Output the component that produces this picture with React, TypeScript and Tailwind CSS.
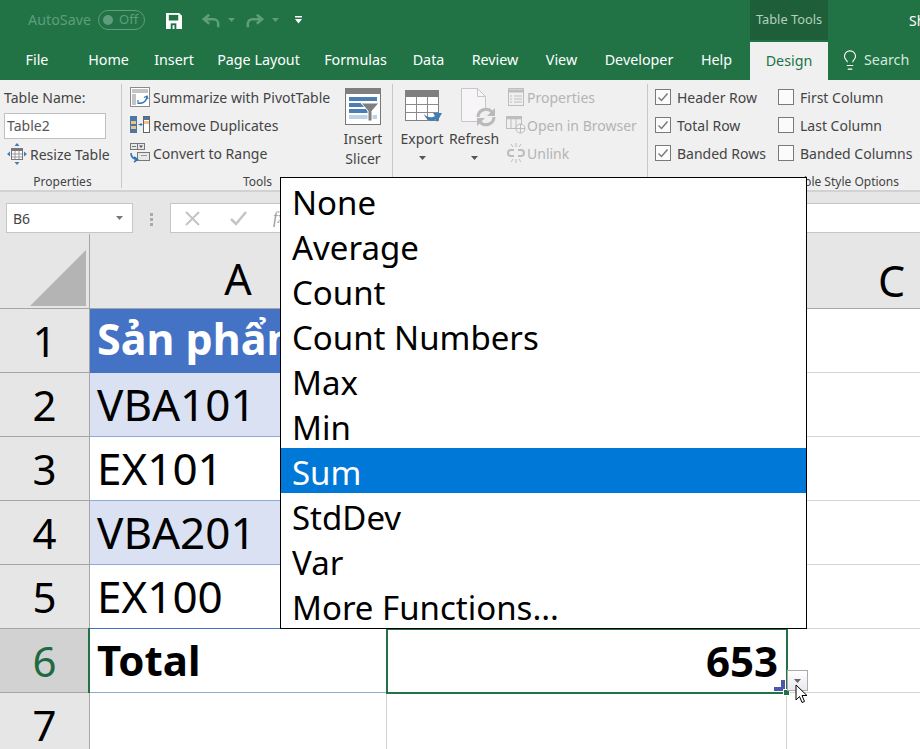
import { Lightbulb } from "lucide-react";

const tabs = [
  { label: "File", w: 74 },
  { label: "Home", w: 69 },
  { label: "Insert", w: 62 },
  { label: "Page Layout", w: 107 },
  { label: "Formulas", w: 87 },
  { label: "Data", w: 59 },
  { label: "Review", w: 74 },
  { label: "View", w: 59 },
  { label: "Developer", w: 96 },
  { label: "Help", w: 59 },
];

const menuItems = ["None", "Average", "Count", "Count Numbers", "Max", "Min", "Sum", "StdDev", "Var", "More Functions..."];

function Check({ on, label }: { on: boolean; label: string }) {
  return (
    <div className="flex h-7 items-center gap-[6px] whitespace-nowrap">
      <span className="flex h-[16px] w-[16px] items-center justify-center border border-[#7a7a7a] bg-[#fbfbfb]">
        {on && (
          <svg width="12" height="12" viewBox="0 0 12 12" fill="none" stroke="#777" strokeWidth="1.4">
            <path d="M1.5 6.5 4.5 9.5 10.5 2.5" />
          </svg>
        )}
      </span>
      <span>{label}</span>
    </div>
  );
}

function PivotIcon() {
  return (
    <svg width="20" height="20" viewBox="0 0 20 20">
      <rect x="0.5" y="0.5" width="19" height="19" fill="#fff" stroke="#8a8a8a" />
      <rect x="2" y="2" width="16" height="4" fill="#c4c4c4" />
      <rect x="2" y="7" width="4" height="11" fill="#c4c4c4" />
      <path d="M9 16c4 .5 7-1.500 8-6" fill="none" stroke="#2f75b5" strokeWidth="1.300" />
      <path d="M8 13v3.500h3.500M14 10.500l3-1.500 1 3" fill="none" stroke="#2f75b5" strokeWidth="1.200" />
    </svg>
  );
}

function DuplicatesIcon() {
  return (
    <svg width="20" height="18" viewBox="0 0 20 18">
      <rect x="0" y="0" width="7" height="17" fill="#4a76a8" />
      <rect x="1" y="5" width="5" height="3" fill="#f0c27a" />
      <rect x="1" y="10" width="5" height="3" fill="#f0c27a" />
      <rect x="13.500" y="0.500" width="6" height="16" fill="#fff" stroke="#666" />
      <rect x="14" y="1" width="5" height="3" fill="#4a76a8" />
      <rect x="14" y="5" width="5" height="3" fill="#f0c27a" />
      <path d="M8.500 8.500h3.500M10.500 7l1.500 1.500-1.500 1.500" fill="none" stroke="#2f75b5" />
    </svg>
  );
}

function ConvertIcon() {
  return (
    <svg width="20" height="20" viewBox="0 0 20 20">
      <rect x="0.500" y="0.500" width="14" height="6" fill="#e8e8e8" stroke="#777" />
      <path d="M2 3.500h4M7.500.5v6" stroke="#777" />
      <path d="M9 2.500h4l-2 2.500z" fill="#555" />
      <rect x="7.500" y="9.500" width="12" height="8" fill="#e8e8e8" stroke="#777" />
      <path d="M11 12.500h6" stroke="#999" />
      <path d="M1 10c0 4 3 6 6 6.500M4 14l3.500 2.500L4 19" fill="none" stroke="#2f75b5" strokeWidth="1.600" />
    </svg>
  );
}

function ResizeIcon() {
  return (
    <svg width="20" height="22" viewBox="0 0 20 22">
      <rect x="4.500" y="5.500" width="11" height="11" fill="#fff" stroke="#777" />
      <rect x="5" y="5" width="10" height="3" fill="#777" />
      <path d="M8 8v8M12 8v8M5 11h10M5 14h10" stroke="#999" />
      <path d="M10 0l-2.500 3h5zM10 22l-2.500-3h5zM0 11l3-2.500v5zM20 11l-3-2.500v5z" fill="#3f7cb8" />
    </svg>
  );
}

function SlicerIcon() {
  return (
    <svg width="36" height="37" viewBox="0 0 36 37">
      <rect x="0.500" y="0.500" width="35" height="36" fill="#fff" stroke="#777" />
      <rect x="0" y="0" width="36" height="6" fill="#7f7f7f" />
      <rect x="4" y="9" width="28" height="4" fill="#4a7eb5" />
      <rect x="4" y="15" width="16" height="4" fill="#4a7eb5" />
      <rect x="4" y="21" width="20" height="4" fill="#4a7eb5" />
      <rect x="4" y="27" width="28" height="4" fill="#bcd2e8" />
      <path d="M16 15h18l-7 8v10h-4V23z" fill="#7f7f7f" stroke="#fff" />
    </svg>
  );
}

function ExportIcon() {
  return (
    <svg width="38" height="37" viewBox="0 0 38 37">
      <rect x="0.500" y="0.500" width="33" height="30" fill="#fff" stroke="#808080" />
      <rect x="0" y="0" width="34" height="7" fill="#7f7f7f" />
      <path d="M11.500 7v24M22.500 7v24M1 14.500h32M1 22.500h32" stroke="#8a8a8a" />
      <path d="M19 24c3 4 8 4 11 2l-2-3h9l-5 9-1.500-2.500c-5 3-10 0-11.500-5.500z" fill="#3f7cb8" />
    </svg>
  );
}

function RefreshIcon() {
  return (
    <svg width="35" height="39" viewBox="0 0 35 39">
      <path d="M.5.5h16l8 8v25H.5z" fill="#f7f5f7" stroke="#c9c4c9" />
      <path d="M16.500.5v8h8" fill="none" stroke="#c9c4c9" />
      <circle cx="25" cy="29" r="9.500" fill="#f0f0f0" />
      <path d="M17 29a8 8 0 0 1 14-5M33 29a8 8 0 0 1-14 5" fill="none" stroke="#b9b9b9" strokeWidth="3" />
      <path d="M34 20v8h-8zM16 38v-8h8z" fill="#b9b9b9" />
    </svg>
  );
}

function PropsIcon() {
  return (
    <svg width="16" height="18" viewBox="0 0 16 18" fill="none" stroke="#bdbdbd">
      <rect x="0.500" y="0.500" width="15" height="17" />
      <path d="M0 3h16" strokeWidth="3" />
      <path d="M6 8h8M6 11h8M6 14h8M2 8h2M2 11h2M2 14h2" />
    </svg>
  );
}

function BrowserIcon() {
  return (
    <svg width="20" height="18" viewBox="0 0 20 18" fill="none" stroke="#bdbdbd">
      <rect x="0.500" y="0.500" width="15" height="12" />
      <path d="M0 2h16" strokeWidth="2.500" />
      <path d="M5 2v10M10 2v10" />
      <circle cx="14.500" cy="12.500" r="4.500" fill="#f0f0f0" />
      <path d="M10 12.500h9M14.500 8v9" />
    </svg>
  );
}

function UnlinkIcon() {
  return (
    <svg width="18" height="20" viewBox="0 0 18 20" fill="none" stroke="#bdbdbd">
      <path d="M7 7H4a3 3 0 0 0 0 6h3M11 7h3a3 3 0 0 1 0 6h-3" strokeWidth="2" />
      <path d="M9 0v4M9 16v4M4 1l2 3M14 1l-2 3M4 19l2-3M14 19l-2-3" />
    </svg>
  );
}

function Caret({ c = "#555" }: { c?: string }) {
  return (
    <svg width="7" height="4" viewBox="0 0 7 4">
      <path d="M0 0h7L3.500 4z" fill={c} />
    </svg>
  );
}

function TitleBar() {
  return (
    <div className="flex h-10 overflow-hidden bg-[#217346] [&>*]:shrink-0">
      <div className="ml-7 flex h-10 w-[62px] items-center whitespace-nowrap text-[14.3px] text-[#5f9d7c]">AutoSave</div>
      <div className="ml-2 mt-[10px] flex h-[20px] w-[47px] items-center rounded-full border border-[#5f9d7c] pl-[4px] text-[13px] text-[#5f9d7c]">
        <span className="h-[10px] w-[10px] rounded-full bg-[#5f9d7c]" />
        <span className="ml-[6px]">Off</span>
      </div>
      <svg className="ml-[21px] mt-[13px]" width="16" height="16" viewBox="0 0 17 17">
        <path d="M0 0h14l3 3v14H0z" fill="#fff" />
        <rect x="3" y="2" width="10" height="6" fill="#217346" />
        <rect x="5" y="11" width="6" height="6" fill="#217346" />
        <rect x="7" y="13" width="2" height="4" fill="#fff" />
      </svg>
      <svg className="ml-5 mt-[13px]" width="18" height="16" viewBox="0 0 20 16" fill="none" stroke="#5f9d7c" strokeWidth="2.800">
        <path d="M8 1 2 6l6 5M2 6h11a5 5 0 0 1 5 5v4" />
      </svg>
      <div className="ml-2 mt-[18px]"><Caret c="#5f9d7c" /></div>
      <svg className="ml-[11px] mt-[13px]" width="18" height="16" viewBox="0 0 20 16" fill="none" stroke="#5f9d7c" strokeWidth="2.800">
        <path d="M12 1l6 5-6 5M18 6H7a5 5 0 0 0-5 5v4" />
      </svg>
      <div className="ml-2 mt-[18px]"><Caret c="#5f9d7c" /></div>
      <svg className="ml-4 mt-4" width="7" height="8" viewBox="0 0 7 8">
        <path d="M0 0h7v1.500H0zM0 3h7L3.500 7.500z" fill="#fff" />
      </svg>
      <div className="ml-[448px] flex h-[42px] w-[78px] items-center justify-center whitespace-nowrap bg-[#1e5f39] pb-[3px] text-[12.800px] text-[#b3d0bf]">
        Table Tools
      </div>
      <div className="ml-[81px] flex h-10 items-center whitespace-nowrap text-[14px] text-white">Sh</div>
    </div>
  );
}

function TabBar() {
  return (
    <div className="flex h-10 bg-[#217346] text-[14.3px] text-white">
      {tabs.map((t) => (
        <div key={t.label} className="flex items-center justify-center" style={{ width: t.w }}>
          {t.label}
        </div>
      ))}
      <div className="ml-[4px] mt-[2px] flex h-[38px] w-[78px] items-center justify-center bg-[#f0f0f0] text-[#217346]">Design</div>
      <div className="ml-[11px] flex items-center gap-[3px] text-[#d5e6dc]">
        <Lightbulb size={22} strokeWidth={1.200} color="#fff" />
        <span>Search</span>
      </div>
    </div>
  );
}

function GroupLabel({ children }: { children: React.ReactNode }) {
  return <div className="mt-auto whitespace-nowrap text-center text-[12px] leading-[12px] text-[#444]">{children}</div>;
}

function Ribbon() {
  return (
    <div className="flex h-[112px] border-b-2 border-[#d2d2d2] bg-[#f0f0f0] text-[14px] text-[#444]">
      <div className="mb-[2px] mr-px mt-[4px] flex w-[122px] flex-col border-r border-[#c8c8c8] pl-1 pt-[4px]">
        <div className="h-[20px] leading-[20px]">Table Name:</div>
        <div className="mt-[5px] h-[26px] w-[102px] border border-[#c0c0c0] bg-white pl-[2px] text-[14px] leading-[23px] text-[#555]">Table2</div>
        <div className="mt-[4px] flex items-center gap-[3px] pl-[3px]">
          <ResizeIcon />
          <span>Resize Table</span>
        </div>
        <GroupLabel>Properties</GroupLabel>
      </div>

      <div className="mb-[2px] mt-[4px] flex w-[270px] flex-col border-r border-[#c8c8c8]">
        <div className="flex">
          <div className="-mt-px flex w-[222px] flex-col pl-[7px]">
            <div className="flex h-7 items-center gap-[3px]"><PivotIcon /><span>Summarize with PivotTable</span></div>
            <div className="flex h-7 items-center gap-[3px]"><DuplicatesIcon /><span>Remove Duplicates</span></div>
            <div className="flex h-7 items-center gap-[3px]"><ConvertIcon /><span>Convert to Range</span></div>
          </div>
          <div className="flex w-[36px] flex-col items-center pt-[4px]">
            <SlicerIcon />
            <div className="mt-[4px] text-center leading-[20px]">Insert<br />Slicer</div>
          </div>
        </div>
        <GroupLabel>Tools</GroupLabel>
      </div>

      <div className="mb-[2px] mt-[4px] flex w-[255px] border-r border-[#c8c8c8] pl-[5px]">
        <div className="flex w-[48px] flex-col items-center pt-[6px]">
          <div className="ml-[4px]"><ExportIcon /></div>
          <div className="mt-[2px] leading-[20px]">Export</div>
          <div className="mt-[7px]"><Caret /></div>
        </div>
        <div className="ml-[4px] flex w-[48px] flex-col items-center pt-[4px]">
          <div className="ml-[8px]"><RefreshIcon /></div>
          <div className="mt-[2px] leading-[20px]">Refresh</div>
          <div className="mt-[7px]"><Caret /></div>
        </div>
        <div className="-mt-px ml-[8px] flex flex-col text-[#b4b4b4]">
          <div className="flex h-7 items-center gap-[1px]"><span className="flex w-5 justify-center"><PropsIcon /></span><span>Properties</span></div>
          <div className="flex h-7 items-center gap-[1px]"><span className="flex w-5 justify-center"><BrowserIcon /></span><span>Open in Browser</span></div>
          <div className="flex h-7 items-center gap-[1px]"><span className="flex w-5 justify-center"><UnlinkIcon /></span><span>Unlink</span></div>
        </div>
      </div>

      <div className="mb-[2px] mt-[4px] flex flex-1 flex-col pl-[7px]">
        <div className="-mt-px flex">
          <div className="w-[123px]">
            <Check on label="Header Row" />
            <Check on label="Total Row" />
            <Check on label="Banded Rows" />
          </div>
          <div>
            <Check on={false} label="First Column" />
            <Check on={false} label="Last Column" />
            <Check on={false} label="Banded Columns" />
          </div>
        </div>
        <div className="mt-auto pr-[21px] text-right text-[12px] leading-[12px] text-[#444]">Table Style Options</div>
      </div>
    </div>
  );
}

function FormulaBar() {
  return (
    <div className="flex h-[42px] items-end bg-[#e6e6e6] pb-px pl-[6px]">
      <div className="flex h-[30px] w-[127px] items-center justify-between border border-[#c6c6c6] bg-white pl-[6px] pr-[9px] text-[14px] text-[#444]">
        B6
        <Caret c="#777" />
      </div>
      <div className="mb-[7px] ml-[17px] mr-[17px] flex flex-col gap-[2px]">
        <span className="h-[3px] w-[3px] bg-[#aaa]" />
        <span className="h-[3px] w-[3px] bg-[#aaa]" />
        <span className="h-[3px] w-[3px] bg-[#aaa]" />
      </div>
      <div className="flex h-[30px] flex-1 items-center border-y border-l border-[#c6c6c6] bg-white pl-[14px]">
        <svg width="15" height="15" viewBox="0 0 15 15" stroke="#c4c4c4" strokeWidth="2">
          <path d="M1 1l13 13M14 1 1 14" />
        </svg>
        <svg className="ml-[30px]" width="17" height="15" viewBox="0 0 17 15" fill="none" stroke="#c4c4c4" strokeWidth="2.500">
          <path d="M1 8l5 5L16 1" />
        </svg>
        <span className="ml-[26px] font-['Liberation_Serif',serif] text-[16px] italic text-[#999]">fx</span>
      </div>
    </div>
  );
}

function RowHead({ n, active, last }: { n: number; active?: boolean; last?: boolean }) {
  return (
    <div
      className={`flex items-center justify-center border-r border-[#a6a6a6] text-[42px] leading-none ${
        last ? "h-14 pt-2" : "h-16 border-b"
      } ${active ? "bg-[#d2d2d2] text-[#1e6b41]" : "bg-[#e6e6e6] text-black"}`}
    >
      {n}
    </div>
  );
}

function Cell({ children, cls = "" }: { children?: React.ReactNode; cls?: string }) {
  return <div className={`flex h-16 items-center overflow-hidden whitespace-nowrap border-b border-r pb-[2px] pl-[7px] text-black ${cls}`}>{children}</div>;
}

function Sheet() {
  const plain = "border-[#d4d4d4] border-r-0";
  return (
    <div className="grid grid-cols-[90px_297px_400px_133px]">
      <div className="flex h-[75px] items-end justify-end border-b border-r border-[#a6a6a6] bg-[#e6e6e6] pb-[2px] pr-[3px]">
        <svg width="56" height="56" viewBox="0 0 56 56">
          <path d="M0 56 56 0v56z" fill="#b4b4b4" />
        </svg>
      </div>
      <div className="flex h-[75px] items-center justify-center border-b border-r border-[#a6a6a6] bg-[#e6e6e6] pt-[14px] text-[43px] leading-none text-black">A</div>
      <div className="h-[75px] border-b border-r border-[#a6a6a6] bg-[#e6e6e6]" />
      <div className="flex h-[75px] items-center border-b border-[#a6a6a6] bg-[#e6e6e6] pl-[91px] pt-[18px] text-[43px] leading-none text-black">C</div>

      <RowHead n={1} />
      <Cell cls="border-[#4472c4] bg-[#4472c4] text-[43px] font-bold text-white">Sản phẩm</Cell>
      <Cell cls="border-[#4472c4] bg-[#4472c4]" />
      <Cell cls={plain} />

      <RowHead n={2} />
      <Cell cls="border-[#8ea9db] bg-[#d9e1f2] text-[44px]">VBA101</Cell>
      <Cell cls="border-[#8ea9db] bg-[#d9e1f2]" />
      <Cell cls={plain} />

      <RowHead n={3} />
      <Cell cls="border-b-[#8ea9db] border-r-[#d4d4d4] text-[44px]">EX101</Cell>
      <Cell cls="border-b-[#8ea9db] border-r-[#d4d4d4]" />
      <Cell cls={plain} />

      <RowHead n={4} />
      <Cell cls="border-[#8ea9db] bg-[#d9e1f2] text-[44px]">VBA201</Cell>
      <Cell cls="border-[#8ea9db] bg-[#d9e1f2]" />
      <Cell cls={plain} />

      <RowHead n={5} />
      <Cell cls="border-b-[#4472c4] border-r-[#d4d4d4] text-[44px]">EX100</Cell>
      <Cell cls="border-b-[#4472c4] border-r-[#d4d4d4]" />
      <Cell cls={plain} />

      <RowHead n={6} active />
      <Cell cls="border-b-[#8ea9db] border-r-0 text-[42px] font-bold">Total</Cell>
      <div className="flex h-16 items-center justify-end whitespace-nowrap pb-[2px] pr-[9px] text-[42px] font-bold text-black">653</div>
      <Cell cls={plain} />

      <RowHead n={7} last />
      <div className="h-14 border-r border-[#d4d4d4]" />
      <div className="h-14 border-r border-[#d4d4d4]" />
      <div className="h-14" />
    </div>
  );
}

function FilterMenu() {
  return (
    <div className="absolute left-[280px] top-[177px] w-[527px] border border-black bg-white text-[33px] leading-none text-black">
      {menuItems.map((m) => (
        <div key={m} className={`flex h-[45px] items-center pl-[11px] pt-[3px] ${m === "Sum" ? "bg-[#0078d7] text-white" : ""}`}>
          {m}
        </div>
      ))}
    </div>
  );
}

function CellOverlays() {
  return (
    <>
      {/* selection outline */}
      <span className="absolute left-[88px] top-[628px] h-[65px] w-[2px] bg-[#217346]" />
      <span className="absolute left-[386px] top-[628px] h-[66px] w-[402px] border-2 border-[#217346]" />
      {/* resize handle of the table */}
      <svg className="absolute left-[774px] top-[680px]" width="11" height="11" viewBox="0 0 11 11">
        <path d="M7 0h4v11H0V7h7z" fill="#4a56b0" />
      </svg>
      {/* fill handle */}
      <span className="absolute left-[783px] top-[689px] h-[7px] w-[7px] border border-white bg-[#217346]" />
      {/* dropdown button of the selected cell */}
      <div className="absolute left-[787px] top-[670px] flex h-[21px] w-[21px] items-start justify-center border border-[#ababab] bg-gradient-to-b from-white to-[#e8e8ee] pt-[8px]">
        <Caret c="#666" />
      </div>
      {/* mouse pointer */}
      <svg className="absolute left-[795px] top-[684px]" width="13" height="20" viewBox="0 0 13 20">
        <path d="M1 1v15l3.500-3.500 2.500 6 2.500-1-2.500-6H12z" fill="#fff" stroke="#000" />
      </svg>
    </>
  );
}

export default function App() {
  return (
    <div className="relative h-[749px] w-[920px] overflow-hidden bg-white font-['Noto_Sans',sans-serif]">
      <TitleBar />
      <TabBar />
      <Ribbon />
      <FormulaBar />
      <Sheet />
      <CellOverlays />
      <FilterMenu />
    </div>
  );
}
